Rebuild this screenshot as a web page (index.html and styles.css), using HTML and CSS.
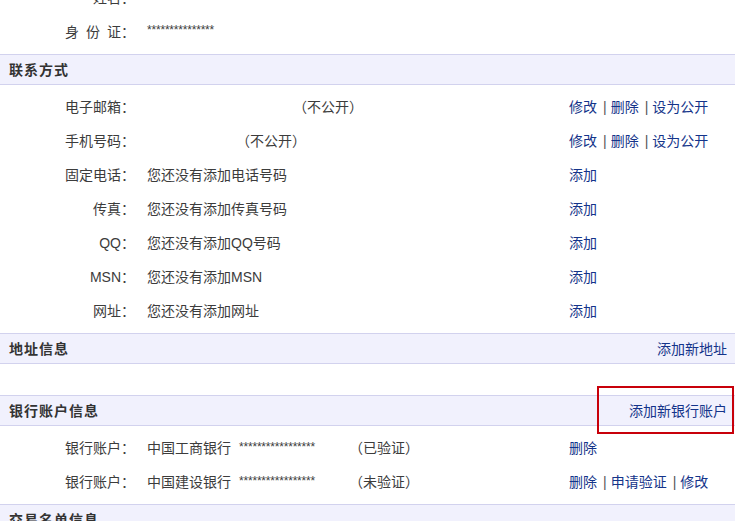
FILE: index.html
```html
<!DOCTYPE html>
<html lang="zh-CN">
<head>
    <meta charset="UTF-8">
    <meta name="viewport" content="width=device-width, initial-scale=1.0">
    <title>个人信息</title>
    <link rel="stylesheet" href="styles.css">
</head>
<body>
    <div class="page">
        <!-- 基本信息 -->
        <div class="section-body first">
            <div class="row">
                <span class="label">姓名：</span>
                <span class="value"></span>
                <span class="actions"></span>
            </div>
            <div class="row">
                <span class="label">身&ensp;份&ensp;证：</span>
                <span class="value"><span class="mask">***************</span></span>
                <span class="actions"></span>
            </div>
        </div>

        <div class="section-head">
            <h2>联系方式</h2>
        </div>
        <div class="section-body">
            <div class="row">
                <span class="label">电子邮箱：</span>
                <span class="value"><span class="hidden-val email"></span>（不公开）</span>
                <span class="actions">
                    <a href="#">修改</a><span class="sep">|</span><a href="#">删除</a><span class="sep">|</span><a href="#">设为公开</a>
                </span>
            </div>
            <div class="row">
                <span class="label">手机号码：</span>
                <span class="value"><span class="hidden-val phone"></span>（不公开）</span>
                <span class="actions">
                    <a href="#">修改</a><span class="sep">|</span><a href="#">删除</a><span class="sep">|</span><a href="#">设为公开</a>
                </span>
            </div>
            <div class="row">
                <span class="label">固定电话：</span>
                <span class="value">您还没有添加电话号码</span>
                <span class="actions"><a href="#">添加</a></span>
            </div>
            <div class="row">
                <span class="label">传真：</span>
                <span class="value">您还没有添加传真号码</span>
                <span class="actions"><a href="#">添加</a></span>
            </div>
            <div class="row">
                <span class="label">QQ：</span>
                <span class="value">您还没有添加QQ号码</span>
                <span class="actions"><a href="#">添加</a></span>
            </div>
            <div class="row">
                <span class="label">MSN：</span>
                <span class="value">您还没有添加MSN</span>
                <span class="actions"><a href="#">添加</a></span>
            </div>
            <div class="row">
                <span class="label">网址：</span>
                <span class="value">您还没有添加网址</span>
                <span class="actions"><a href="#">添加</a></span>
            </div>
        </div>

        <div class="section-head">
            <h2>地址信息</h2>
            <a href="#" class="head-link">添加新地址</a>
        </div>
        <div class="section-body empty"></div>

        <div class="section-head">
            <h2>银行账户信息</h2>
            <a href="#" class="head-link marked">添加新银行账户</a>
        </div>
        <div class="section-body">
            <div class="row">
                <span class="label">银行账户：</span>
                <span class="value">中国工商银行<span class="mask bank">*****************</span><span class="status">（已验证）</span></span>
                <span class="actions"><a href="#">删除</a></span>
            </div>
            <div class="row">
                <span class="label">银行账户：</span>
                <span class="value">中国建设银行<span class="mask bank">*****************</span><span class="status">（未验证）</span></span>
                <span class="actions">
                    <a href="#">删除</a><span class="sep">|</span><a href="#">申请验证</a><span class="sep">|</span><a href="#">修改</a>
                </span>
            </div>
        </div>

        <div class="section-head">
            <h2>交易名单信息</h2>
        </div>
    </div>
</body>
</html>
```

FILE: styles.css
```css
:root {
    --text-color: #3c3c3c;
    --link-color: #14348a;
    --head-bg: #f1f1fd;
    --head-border: #d2d2ee;
    --mark-color: #c8000a;
}

* {
    box-sizing: border-box;
    margin: 0;
    padding: 0;
}

body {
    font-family: "Liberation Sans", "Noto Sans CJK SC", sans-serif;
    font-size: 14px;
    color: var(--text-color);
    background: #fff;
    overflow: hidden;
}

.page {
    width: 735px;
}

/* 分组标题 */
.section-head {
    position: relative;
    height: 31px;
    display: flex;
    align-items: center;
    justify-content: space-between;
    padding: 0 8px 2px 9px;
    background: var(--head-bg);
    border-top: 1px solid var(--head-border);
    border-bottom: 1px solid var(--head-border);
}

.section-head h2 {
    font-size: 14px;
    font-weight: bold;
    letter-spacing: 1px;
    color: #333;
}

.head-link {
    color: var(--link-color);
    text-decoration: none;
}

/* 红框标注 */
.head-link.marked::after {
    content: "";
    position: absolute;
    right: 1px;
    top: -10px;
    width: 133px;
    height: 44px;
    border: 2px solid var(--mark-color);
}

.section-body {
    padding: 5px 0;
}

.section-body.first {
    margin-top: -24px;
}

.section-body.empty {
    height: 31px;
}

.row {
    display: grid;
    grid-template-columns: 135px 422px 1fr;
    column-gap: 12px;
    align-items: center;
    height: 34px;
    padding-bottom: 2px;
}

.row .label {
    text-align: right;
    white-space: nowrap;
}

.row .value {
    white-space: nowrap;
}

.row .actions {
    margin-left: -12px;
    white-space: nowrap;
}

.actions a {
    color: var(--link-color);
    text-decoration: none;
}

.sep {
    color: #555;
    margin: 0 4px 0 6px;
}

.mask {
    font-size: 12px;
    letter-spacing: -0.2px;
    vertical-align: 2px;
}

.mask.bank {
    margin-left: 8px;
}

.status {
    margin-left: 34px;
}

.hidden-val {
    display: inline-block;
}

.hidden-val.email {
    width: 146px;
}

.hidden-val.phone {
    width: 89px;
}
```
